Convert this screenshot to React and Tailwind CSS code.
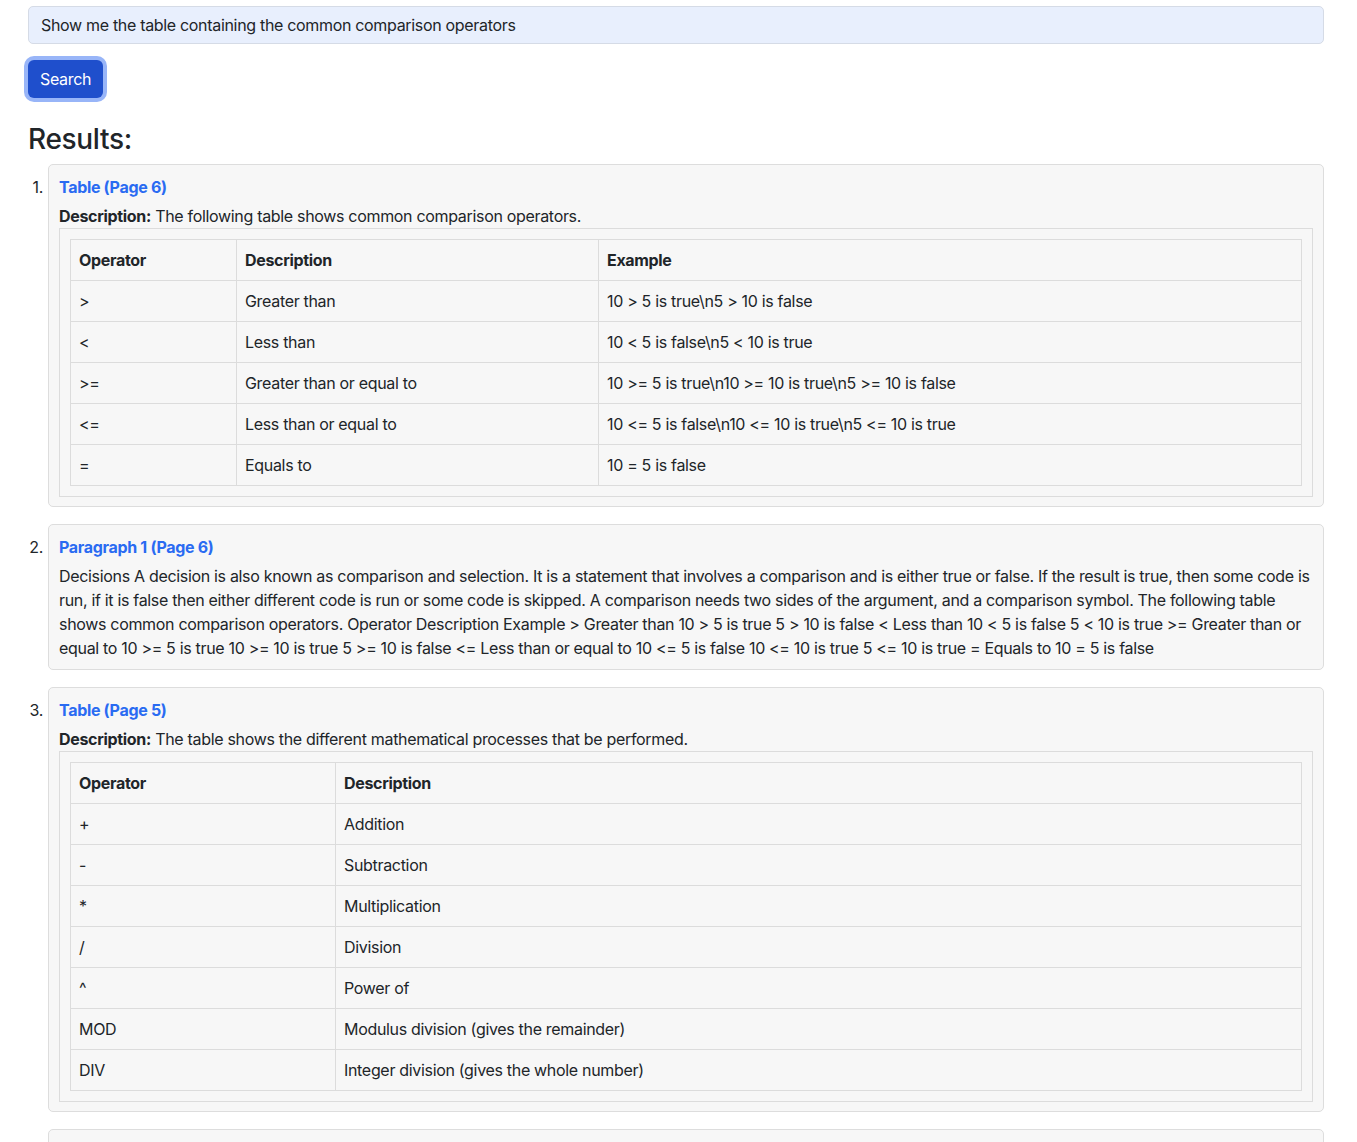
import React from "react";

const table1 = [
  [">", "Greater than", "10 > 5 is true\\n5 > 10 is false"],
  ["<", "Less than", "10 < 5 is false\\n5 < 10 is true"],
  [">=", "Greater than or equal to", "10 >= 5 is true\\n10 >= 10 is true\\n5 >= 10 is false"],
  ["<=", "Less than or equal to", "10 <= 5 is false\\n10 <= 10 is true\\n5 <= 10 is true"],
  ["=", "Equals to", "10 = 5 is false"],
];

const table3 = [
  ["+", "Addition"],
  ["-", "Subtraction"],
  ["*", "Multiplication"],
  ["/", "Division"],
  ["^", "Power of"],
  ["MOD", "Modulus division (gives the remainder)"],
  ["DIV", "Integer division (gives the whole number)"],
];

function DataTable({ headers, rows, widths }) {
  return (
    <div className="border border-[#dcdcdc] p-[10px]">
      <table className="w-full border-collapse">
        <colgroup>
          {widths.map((w, i) => (
            <col key={i} style={w ? { width: w } : undefined} />
          ))}
        </colgroup>
        <thead>
          <tr>
            {headers.map((h) => (
              <th
                key={h}
                className="h-[41px] border border-[#dcdcdc] px-2 text-left font-bold"
              >
                {h}
              </th>
            ))}
          </tr>
        </thead>
        <tbody>
          {rows.map((r, i) => (
            <tr key={i}>
              {r.map((c, j) => (
                <td key={j} className="h-[41px] border border-[#dcdcdc] px-2">
                  {c}
                </td>
              ))}
            </tr>
          ))}
        </tbody>
      </table>
    </div>
  );
}

function Card({ n, children }) {
  return (
    <li className="mb-[17px] flex">
      <div className="w-[20px] shrink-0 pt-[11px] pr-[5px] text-right leading-6">{n}.</div>
      <div className="flex-1 rounded-[5px] border border-[#dddddd] bg-[#f7f7f7] px-[10px] pt-[10px] pb-[9px]">
        {children}
      </div>
    </li>
  );
}

export default function App() {
  return (
    <div
      className="min-h-[1142px] overflow-hidden bg-white pl-[28px] pr-[33px] pt-[6px] text-[16px] tracking-[-0.02em] text-[#212529]"
      style={{ fontFamily: "Inter, 'Liberation Sans', sans-serif" }}
    >
      <div className="flex h-[38px] items-center rounded-[5px] border border-[#d5dbe6] bg-[#e8effd] px-[12px]">
        Show me the table containing the common comparison operators
      </div>
      <div className="mt-[16px]">
        <button className="h-[38px] rounded-[6px] bg-[#1f4fcc] px-[12px] text-white ring-4 ring-[#98b5f8]">
          Search
        </button>
      </div>
      <h2 className="mt-[24px] text-[28px] font-medium leading-[34px]">Results:</h2>
      <ol className="mt-[8px]">
        <Card n={1}>
          <div className="font-bold leading-6 text-[#2a6bf2]">Table (Page 6)</div>
          <div className="mt-[5px] leading-6">
            <span className="font-bold">Description:</span> The following table shows common comparison operators.
          </div>
          <DataTable
            headers={["Operator", "Description", "Example"]}
            rows={table1}
            widths={["166px", "362px", null]}
          />
        </Card>
        <Card n={2}>
          <div className="font-bold leading-6 text-[#2a6bf2]">Paragraph 1 (Page 6)</div>
          <p className="mt-[5px] leading-6">
            Decisions A decision is also known as comparison and selection. It is a statement that involves a comparison and is either true or false. If the result is true, then some code is run, if it is false then either different code is run or some code is skipped. A comparison needs two sides of the argument, and a comparison symbol. The following table shows common comparison operators. Operator Description Example &gt; Greater than 10 &gt; 5 is true 5 &gt; 10 is false &lt; Less than 10 &lt; 5 is false 5 &lt; 10 is true &gt;= Greater than or equal to 10 &gt;= 5 is true 10 &gt;= 10 is true 5 &gt;= 10 is false &lt;= Less than or equal to 10 &lt;= 5 is false 10 &lt;= 10 is true 5 &lt;= 10 is true = Equals to 10 = 5 is false
          </p>
        </Card>
        <Card n={3}>
          <div className="font-bold leading-6 text-[#2a6bf2]">Table (Page 5)</div>
          <div className="mt-[5px] leading-6">
            <span className="font-bold">Description:</span> The table shows the different mathematical processes that be performed.
          </div>
          <DataTable
            headers={["Operator", "Description"]}
            rows={table3}
            widths={["265px", null]}
          />
        </Card>
        <Card n={4}>
          <div className="h-[60px]" />
        </Card>
      </ol>
    </div>
  );
}
